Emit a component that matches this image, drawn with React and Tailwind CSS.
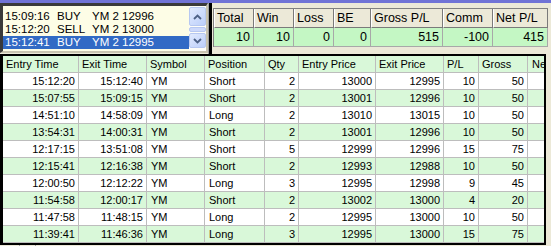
import React from "react";

const trades = [
  ["15:12:20", "15:12:40", "YM", "Short", 2, 13000, 12995, 10, 50],
  ["15:07:55", "15:09:15", "YM", "Short", 2, 13001, 12996, 10, 50],
  ["14:51:10", "14:58:09", "YM", "Long", 2, 13010, 13015, 10, 50],
  ["13:54:31", "14:00:31", "YM", "Short", 2, 13001, 12996, 10, 50],
  ["12:17:15", "13:51:08", "YM", "Short", 5, 12999, 12996, 15, 75],
  ["12:15:41", "12:16:38", "YM", "Short", 2, 12993, 12988, 10, 50],
  ["12:00:50", "12:12:22", "YM", "Long", 3, 12995, 12998, 9, 45],
  ["11:54:58", "12:00:17", "YM", "Short", 2, 13002, 13000, 4, 20],
  ["11:47:58", "11:48:15", "YM", "Long", 2, 12995, 13000, 10, 50],
  ["11:39:41", "11:46:36", "YM", "Long", 3, 12995, 13000, 15, 75],
];

const cols = [
  { name: "Entry Time", w: "w-[76px]", right: true },
  { name: "Exit Time", w: "w-[68px]", right: true },
  { name: "Symbol", w: "w-[58px]" },
  { name: "Position", w: "w-[60px]" },
  { name: "Qty", w: "w-[34px]", right: true },
  { name: "Entry Price", w: "w-[77px]", right: true },
  { name: "Exit Price", w: "w-[68px]", right: true },
  { name: "P/L", w: "w-[35px]", right: true },
  { name: "Gross", w: "w-[49px]", right: true },
];

const orders = [
  ["15:09:16", "BUY", "YM 2 12996"],
  ["15:12:20", "SELL", "YM 2 13000"],
  ["15:12:41", "BUY", "YM 2 12995"],
];

const stats = [
  ["Total", "10", "w-[40px]"],
  ["Win", "10", "w-[40px]"],
  ["Loss", "0", "w-[40px]"],
  ["BE", "0", "w-[37px]"],
  ["Gross P/L", "515", "w-[72px]"],
  ["Comm", "-100", "w-[50px]"],
  ["Net P/L", "415", "flex-1"],
];

const Chevron = ({ up }) => (
  <svg width="9" height="6" viewBox="0 0 9 6">
    <path
      d={up ? "M1 5 L4.5 1.5 L8 5" : "M1 1 L4.5 4.5 L8 1"}
      fill="none"
      stroke="#4d6185"
      strokeWidth="1.8"
    />
  </svg>
);

const ScrollButton = ({ up, className }) => (
  <div
    className={`flex items-center justify-center rounded-[2px] border border-[#b7c8f1] bg-gradient-to-br from-[#e1eafe] to-[#bccffa] ${className}`}
  >
    <Chevron up={up} />
  </div>
);

export default function App() {
  return (
    <div className="w-[551px] h-[246px] overflow-hidden bg-[#ece9d8] font-['Liberation_Sans',Arial,sans-serif] text-black">
      <div className="h-[3px] bg-[#7073d6]" />

      <div className="flex h-[51px]">
        {/* order list */}
        <div className="w-[208px] h-[50px] border-2 border-l-[3px] border-t-[3px] border-[#3a3a3a] border-b-[#c8c4b0] border-r-[#c8c4b0] bg-[#fdfde6] flex">
          <div className="flex-1 pt-[4px] text-[11.5px] leading-[13px]">
            {orders.map((o, i) => (
              <div
                key={i}
                className={`flex h-[13px] pl-[2px] ${i === 2 ? "bg-[#316ac5] text-white" : ""}`}
              >
                <span className="w-[52px]">{o[0]}</span>
                <span className="w-[35px]">{o[1]}</span>
                <span>{o[2]}</span>
              </div>
            ))}
          </div>
          <div className="w-[17px] flex flex-col bg-[#fdfdf8] py-[1px]">
            <ScrollButton up className="h-[19px]" />
            <div className="h-[5px] my-[1px] rounded-[2px] border border-[#b7c8f1] bg-[#cdd9fb]" />
            <ScrollButton className="h-[15px]" />
          </div>
        </div>

        <div className="w-[1px] bg-[#a0a0a0]" />

        {/* summary panel */}
        <div className="flex-1 border-l-[3px] border-black pl-[1px] pt-[5px] pr-[3px]">
          <div className="border-l border-t border-[#808080] text-[12.5px] leading-[18px]">
            <div className="flex h-[19px] bg-[#ece9d8]">
              {stats.map((s) => (
                <div
                  key={s[0]}
                  className={`${s[2]} border-r border-b border-[#7a7a7a] border-l border-l-white pl-[2px] whitespace-nowrap overflow-hidden`}
                >
                  {s[0]}
                </div>
              ))}
            </div>
            <div className="flex h-[19px] bg-[#c4f7c4]">
              {stats.map((s) => (
                <div
                  key={s[0]}
                  className={`${s[2]} border-r border-b border-[#a8a8a8] text-right pr-[3px]`}
                >
                  {s[1]}
                </div>
              ))}
            </div>
          </div>
        </div>
      </div>

      {/* trade grid */}
      <div className="w-[546px] border-t-2 border-l-[3px] border-r-2 border-b-2 border-black text-[11px] leading-[16px] overflow-hidden">
        <div className="flex h-[17px] bg-[#d9f8d9]">
          {cols.map((c) => (
            <div
              key={c.name}
              className={`${c.w} shrink-0 border-r border-b border-[#bdbdbd] pl-[3px] whitespace-nowrap`}
            >
              {c.name}
            </div>
          ))}
          <div className="flex-1 border-b border-[#bdbdbd] pl-[4px] whitespace-nowrap overflow-hidden">
            Net
          </div>
        </div>
        {trades.map((t, r) => (
          <div
            key={r}
            className={`flex h-[17px] ${r % 2 === 1 ? "bg-[#d9f8d9]" : "bg-white"}`}
          >
            {cols.map((c, i) => (
              <div
                key={c.name}
                className={`${c.w} shrink-0 border-r border-b border-[#bdbdbd] whitespace-nowrap ${
                  c.right ? "text-right pr-[3px]" : "pl-[4px]"
                }`}
              >
                {t[i]}
              </div>
            ))}
            <div className="flex-1 border-b border-[#bdbdbd]" />
          </div>
        ))}
      </div>
      <div className="flex h-[2px]">
        <div className="w-[20px] border-r border-[#a0a0a0]" />
        <div className="w-[16px] border-r border-[#a0a0a0]" />
      </div>
    </div>
  );
}
